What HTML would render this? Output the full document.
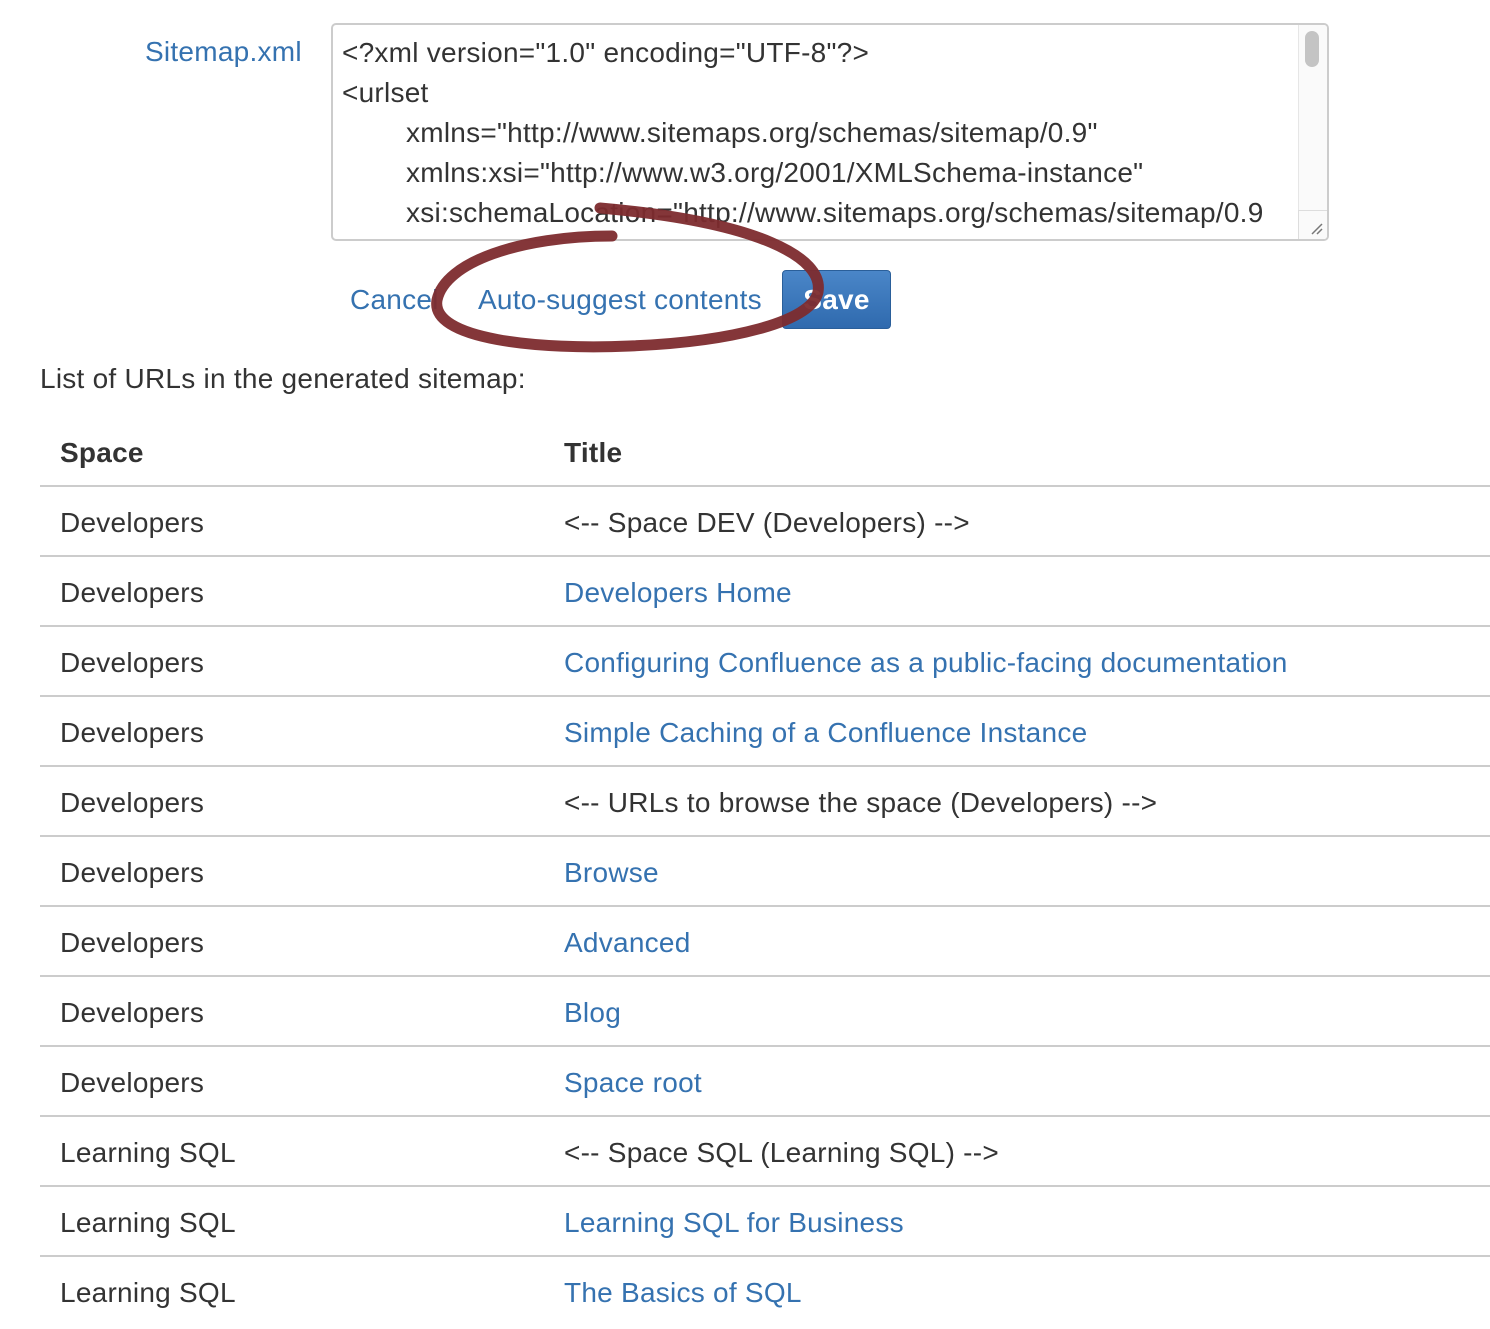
<!DOCTYPE html>
<html><head><meta charset="utf-8"><style>
body{margin:0;width:1490px;height:1290px;overflow:hidden;background:#fff;font-family:"Liberation Sans",Arial,sans-serif;font-size:28px;color:#333;position:relative;letter-spacing:0.25px}
.a{position:absolute;white-space:nowrap}
.l{color:#3572b0}
.r{position:absolute;left:40px;width:1450px;height:70px;line-height:72px;border-bottom:2px solid #ccc;box-sizing:border-box}
.r span{position:absolute}
.r .c1{left:20px}.r .c2{left:524px}
.ta{position:absolute;left:331px;top:23px;width:998px;height:218px;border:2px solid #ccc;border-radius:5px;box-sizing:border-box;overflow:hidden;background:#fff}
.ta div{position:absolute;white-space:nowrap;line-height:40px}
</style></head><body>
<div class="a l" style="left:145px;top:36px">Sitemap.xml</div>
<div class="ta">
<div style="left:9px;top:8px">&lt;?xml version="1.0" encoding="UTF-8"?&gt;</div>
<div style="left:9px;top:48px">&lt;urlset</div>
<div style="left:73px;top:88px">xmlns="http://www.sitemaps.org/schemas/sitemap/0.9"</div>
<div style="left:73px;top:128px">xmlns:xsi="http://www.w3.org/2001/XMLSchema-instance"</div>
<div style="left:73px;top:168px">xsi:schemaLocation="http://www.sitemaps.org/schemas/sitemap/0.9</div>
<div style="right:0;top:0;width:28px;height:214px;background:#fafafa;border-left:1px solid #e6e6e6"></div>
<div style="right:8px;top:6px;width:14px;height:36px;background:#c4c4c4;border-radius:7px"></div>
<div style="right:0;bottom:0;width:28px;height:28px;background:#fafafa;border-top:1px solid #ddd;border-left:1px solid #ddd"></div>
<svg style="position:absolute;right:3px;bottom:3px" width="14" height="14"><path d="M2 12L12 2M7 12L12 7" stroke="#777" stroke-width="1.5"/></svg>
</div>
<div class="a l" style="left:350px;top:284px">Cancel</div>
<div class="a l" style="left:478px;top:284px">Auto-suggest contents</div>
<div class="a" style="left:782px;top:270px;width:109px;height:59px;background:linear-gradient(#4a86c8,#2f6aae);border:1px solid #2a5f9a;border-radius:4px;box-sizing:border-box;color:#fff;font-weight:bold;text-align:center;line-height:57px">Save</div>
<svg class="a" style="left:0;top:0" width="1490" height="400"><path d="M612,236 C520,236 445,262 437,300 C430,340 540,350 630,346 C730,342 812,322 818,292 C824,258 760,222 600,208" fill="none" stroke="#7d2b2e" stroke-width="11" stroke-linecap="round" opacity="0.95"/></svg>
<div class="a" style="left:40px;top:363px">List of URLs in the generated sitemap:</div>
<div class="r" style="top:417px;font-weight:bold"><span class="c1">Space</span><span class="c2">Title</span></div>
<div class="r" style="top:487px"><span class="c1">Developers</span><span class="c2">&lt;-- Space DEV (Developers) --&gt;</span></div>
<div class="r" style="top:557px"><span class="c1">Developers</span><span class="c2 l">Developers Home</span></div>
<div class="r" style="top:627px"><span class="c1">Developers</span><span class="c2 l">Configuring Confluence as a public-facing documentation</span></div>
<div class="r" style="top:697px"><span class="c1">Developers</span><span class="c2 l">Simple Caching of a Confluence Instance</span></div>
<div class="r" style="top:767px"><span class="c1">Developers</span><span class="c2">&lt;-- URLs to browse the space (Developers) --&gt;</span></div>
<div class="r" style="top:837px"><span class="c1">Developers</span><span class="c2 l">Browse</span></div>
<div class="r" style="top:907px"><span class="c1">Developers</span><span class="c2 l">Advanced</span></div>
<div class="r" style="top:977px"><span class="c1">Developers</span><span class="c2 l">Blog</span></div>
<div class="r" style="top:1047px"><span class="c1">Developers</span><span class="c2 l">Space root</span></div>
<div class="r" style="top:1117px"><span class="c1">Learning SQL</span><span class="c2">&lt;-- Space SQL (Learning SQL) --&gt;</span></div>
<div class="r" style="top:1187px"><span class="c1">Learning SQL</span><span class="c2 l">Learning SQL for Business</span></div>
<div class="r" style="top:1257px;border:0"><span class="c1">Learning SQL</span><span class="c2 l">The Basics of SQL</span></div>
</body></html>
